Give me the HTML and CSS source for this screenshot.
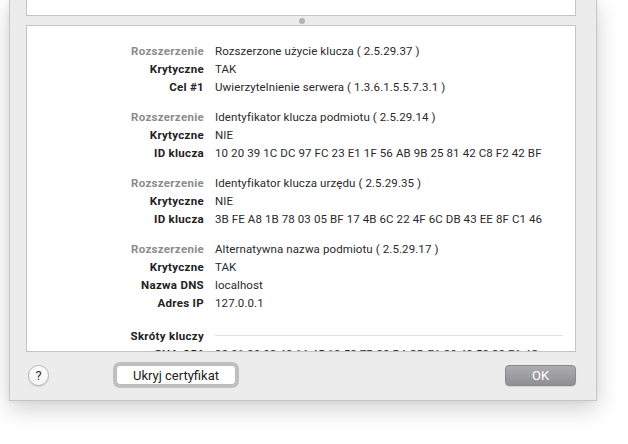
FILE: index.html
```html
<!DOCTYPE html>
<html lang="pl">
<head>
<meta charset="utf-8">
<link rel="stylesheet" href="styles.css">
</head>
<body>
<div class="window">
  <div class="panel panel-top"></div>
  <div class="splitter"><span class="dot"></span></div>
  <div class="panel panel-main">
    <div class="details">
      <div class="group">
        <div class="k dim">Rozszerzenie</div><div class="v">Rozszerzone użycie klucza ( 2.5.29.37 )</div>
        <div class="k">Krytyczne</div><div class="v">TAK</div>
        <div class="k">Cel #1</div><div class="v">Uwierzytelnienie serwera ( 1.3.6.1.5.5.7.3.1 )</div>
      </div>
      <div class="group">
        <div class="k dim">Rozszerzenie</div><div class="v">Identyfikator klucza podmiotu ( 2.5.29.14 )</div>
        <div class="k">Krytyczne</div><div class="v">NIE</div>
        <div class="k">ID klucza</div><div class="v">10 20 39 1C DC 97 FC 23 E1 1F 56 AB 9B 25 81 42 C8 F2 42 BF</div>
      </div>
      <div class="group">
        <div class="k dim">Rozszerzenie</div><div class="v">Identyfikator klucza urzędu ( 2.5.29.35 )</div>
        <div class="k">Krytyczne</div><div class="v">NIE</div>
        <div class="k">ID klucza</div><div class="v">3B FE A8 1B 78 03 05 BF 17 4B 6C 22 4F 6C DB 43 EE 8F C1 46</div>
      </div>
      <div class="group">
        <div class="k dim">Rozszerzenie</div><div class="v">Alternatywna nazwa podmiotu ( 2.5.29.17 )</div>
        <div class="k">Krytyczne</div><div class="v">TAK</div>
        <div class="k">Nazwa DNS</div><div class="v">localhost</div>
        <div class="k">Adres IP</div><div class="v">127.0.0.1</div>
      </div>
      <div class="section">
        <div class="k">Skróty kluczy</div><div class="rule"></div>
        <div class="k">SHA-256</div><div class="v">30 01 30 02 48 16 45 18 52 7B 30 B4 CD E1 30 48 53 30 E1 4C</div>
      </div>
    </div>
  </div>
  <div class="footer">
    <button class="help">?</button>
    <button class="btn btn-focus">Ukryj certyfikat</button>
    <span class="spacer"></span>
    <button class="btn btn-ok">OK</button>
  </div>
</div>
</body>
</html>
```

FILE: styles.css
```css
html, body {
  margin: 0;
  padding: 0;
  background: #ffffff;
  height: 444px;
  overflow: hidden;
  font-family: Roboto, "Liberation Sans", Arial, sans-serif;
  font-size: 11.5px;
  color: #222222;
}

* {
  box-sizing: border-box;
}

.window {
  margin-left: 9px;
  width: 588px;
  height: 401px;
  background: #ececec;
  border: 1px solid #c6c6c6;
  border-top: none;
  box-shadow: 0 8px 22px rgba(0, 0, 0, 0.18), 0 0 6px rgba(0, 0, 0, 0.06);
  display: flex;
  flex-direction: column;
  padding: 0 20px 0 16px;
}

.panel {
  background: #ffffff;
  border: 1px solid #c4c4c4;
}

.panel-top {
  height: 16px;
  border-top: none;
}

.splitter {
  height: 9px;
  display: flex;
  align-items: center;
  justify-content: center;
}

.dot {
  width: 6px;
  height: 6px;
  border-radius: 50%;
  background: #b4b4b4;
  margin-left: 2px;
}

.panel-main {
  height: 327px;
  overflow: hidden;
}

.details {
  padding-top: 16px;
  display: flex;
  flex-direction: column;
  gap: 12px;
}

.group, .section {
  display: grid;
  grid-template-columns: 177px 1fr;
  column-gap: 11px;
  line-height: 18px;
}

.section {
  margin-top: 3px;
  grid-template-rows: 18px 18px;
  row-gap: 0;
}

.k {
  text-align: right;
  font-weight: 700;
  color: #222222;
  letter-spacing: 0.3px;
}

.k.dim {
  color: #8c8c8c;
}

.v {
  color: #2a2a2a;
  white-space: nowrap;
  letter-spacing: 0.1px;
}

.rule {
  align-self: center;
  height: 1px;
  background: #e2e2e2;
  margin-right: 12px;
  margin-top: -1px;
}

.footer {
  flex: 1;
  display: flex;
  align-items: center;
  padding: 0 0 2px 2px;
}

.help {
  width: 21px;
  height: 21px;
  border-radius: 50%;
  border: 1px solid #b5b5b5;
  background: linear-gradient(#ffffff, #f4f4f4);
  box-shadow: 0 1px 1px rgba(0, 0, 0, 0.12);
  font-family: Roboto, "Liberation Sans", sans-serif;
  font-size: 13px;
  color: #333333;
  padding: 0;
  display: flex;
  align-items: center;
  justify-content: center;
}

.btn {
  font-family: Roboto, "Liberation Sans", sans-serif;
  font-size: 13px;
  height: 20px;
  padding: 0;
  border-radius: 4px;
}

.btn-focus {
  margin-left: 67px;
  width: 120px;
  background: #ffffff;
  color: #222222;
  border: 1px solid #bdbdbd;
  box-shadow: 0 0 0 3px #bfbfbf;
}

.spacer {
  flex: 1;
}

.btn-ok {
  width: 71px;
  height: 21px;
  color: #ffffff;
  border: 1px solid #8a8a8e;
  background: linear-gradient(#acacb0, #8f8f94);
  box-shadow: 0 1px 1px rgba(0, 0, 0, 0.1);
}
```
